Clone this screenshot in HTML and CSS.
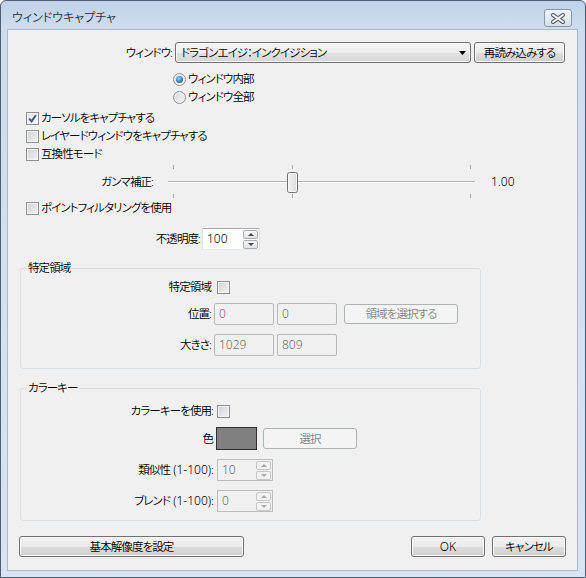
FILE: index.html
```html
<!DOCTYPE html>
<html lang="ja">
<head>
<meta charset="utf-8">
<title>ウィンドウキャプチャ</title>
<link rel="stylesheet" href="styles.css">
</head>
<body>
<div class="window">
  <div class="titlebar">
    <span class="title">ウィンドウキャプチャ</span>
    <span class="close">
      <svg width="16" height="11" viewBox="0 0 16 11">
        <path d="M3 2 L13 9 M13 2 L3 9" stroke="#56606d" stroke-width="4" stroke-linecap="round" fill="none"/>
        <path d="M3 2 L13 9 M13 2 L3 9" stroke="#f6f8fb" stroke-width="2" stroke-linecap="round" fill="none"/>
      </svg>
    </span>
  </div>
  <div class="client">
    <div class="row r-window">
      <span class="lbl lbl-window">ウィンドウ:</span>
      <div class="select">
        <span class="select-text">ドラゴンエイジ：インクイジション</span>
        <svg class="arrow" width="7" height="4" viewBox="0 0 7 4"><path d="M0 0 H7 L3.5 4 Z" fill="#000"/></svg>
      </div>
      <div class="btn btn-reload">再読み込みする</div>
    </div>

    <div class="radios">
      <div class="opt"><span class="radio checked"><span class="dot"></span></span><span class="opt-text">ウィンドウ内部</span></div>
      <div class="opt"><span class="radio"></span><span class="opt-text">ウィンドウ全部</span></div>
    </div>

    <div class="checks">
      <div class="opt"><span class="cb checked"><svg width="11" height="11" viewBox="0 0 11 11"><path d="M2.2 5.6 L4.6 8.3 L8.8 2.2" stroke="#3f5791" stroke-width="2" fill="none"/></svg></span><span class="opt-text">カーソルをキャプチャする</span></div>
      <div class="opt"><span class="cb"></span><span class="opt-text">レイヤードウィンドウをキャプチャする</span></div>
      <div class="opt"><span class="cb"></span><span class="opt-text">互換性モード</span></div>
    </div>

    <div class="row r-gamma">
      <span class="lbl lbl-gamma">ガンマ補正:</span>
      <svg class="slider" width="314" height="34" viewBox="0 0 314 34">
        <defs>
          <linearGradient id="tg" x1="0" y1="0" x2="1" y2="0">
            <stop offset="0" stop-color="#f4f4f4"/>
            <stop offset="1" stop-color="#d9d9d9"/>
          </linearGradient>
        </defs>
        <g fill="#a7a7a7">
          <rect x="7" y="0" width="1" height="4"/>
          <rect x="7" y="29" width="1" height="4"/>
          <rect x="126" y="0" width="1" height="4"/>
          <rect x="126" y="29" width="1" height="4"/>
          <rect x="304" y="0" width="1" height="4"/>
          <rect x="304" y="29" width="1" height="4"/>
        </g>
        <rect x="2" y="16" width="307" height="1" fill="#b3b3b3"/>
        <rect x="2" y="17" width="307" height="1" fill="#ffffff"/>
        <rect x="121.5" y="7.5" width="10" height="20" rx="2" fill="url(#tg)" stroke="#6f6f6f"/>
        <rect x="122.5" y="8.5" width="8" height="18" rx="1" fill="none" stroke="#fbfbfb" stroke-opacity="0.8"/>
      </svg>
      <span class="gamma-val lat">1.00</span>
    </div>

    <div class="checks c-point">
      <div class="opt"><span class="cb"></span><span class="opt-text">ポイントフィルタリングを使用</span></div>
    </div>

    <div class="row r-opacity">
      <span class="lbl lbl-opacity">不透明度:</span>
      <div class="spin spin-opacity">
        <span class="spin-val lat">100</span>
        <span class="spin-btns"><span class="sb up"></span><span class="sb down"></span></span>
      </div>
    </div>

    <fieldset class="group group-region">
      <legend>特定領域</legend>
      <div class="row g1-r1">
        <span class="lbl glbl1">特定領域</span>
        <span class="cb g-cb1"></span>
      </div>
      <div class="row g1-r2">
        <span class="lbl glbl1">位置:</span>
        <span class="dinput lat">0</span>
        <span class="dinput lat">0</span>
        <span class="btn disabled btn-select-region">領域を選択する</span>
      </div>
      <div class="row g1-r3">
        <span class="lbl glbl1">大きさ:</span>
        <span class="dinput lat">1029</span>
        <span class="dinput lat">809</span>
      </div>
    </fieldset>

    <fieldset class="group group-color">
      <legend>カラーキー</legend>
      <div class="row g2-r1">
        <span class="lbl glbl2">カラーキーを使用:</span>
        <span class="cb g-cb2"></span>
      </div>
      <div class="row g2-r2">
        <span class="lbl glbl2">色</span>
        <span class="swatch"></span>
        <span class="btn disabled btn-choose">選択</span>
      </div>
      <div class="row g2-r3">
        <span class="lbl glbl2">類似性<span class="lat"> (1-100)</span>:</span>
        <div class="spin disabled spin-small">
          <span class="spin-val lat">10</span>
          <span class="spin-btns"><span class="sb up"></span><span class="sb down"></span></span>
        </div>
      </div>
      <div class="row g2-r4">
        <span class="lbl glbl2">ブレンド<span class="lat"> (1-100)</span>:</span>
        <div class="spin disabled spin-small">
          <span class="spin-val lat">0</span>
          <span class="spin-btns"><span class="sb up"></span><span class="sb down"></span></span>
        </div>
      </div>
    </fieldset>

    <div class="bottom">
      <div class="btn btn-base">基本解像度を設定</div>
      <div class="btn btn-ok lat">OK</div>
      <div class="btn btn-cancel">キャンセル</div>
    </div>
  </div>
</div>
</body>
</html>
```

FILE: styles.css
```css
* { box-sizing: border-box; }
html, body { margin: 0; padding: 0; }
body {
  width: 586px;
  height: 578px;
  overflow: hidden;
  background: #ffffff;
  font-family: "Noto Sans", "Noto Sans CJK JP", sans-serif;
  font-size: 11.5px;
  font-weight: 350;
  letter-spacing: -0.9px;
  color: #000;
  font-feature-settings: "palt";
}
.lat {
  font-size: 12px;
  letter-spacing: 0;
}

.window {
  width: 586px;
  height: 578px;
  border: 1px solid #4d5e73;
  border-radius: 6px 6px 0 0;
  background: linear-gradient(to bottom, #bfd2e8 0, #cfdcee 28px, #d8e4f2 100%);
  display: flex;
  flex-direction: column;
}

.titlebar {
  height: 28px;
  flex: none;
  display: flex;
  align-items: flex-start;
  justify-content: space-between;
  padding: 8px 13px 0 11px;
}
.title {
  font-size: 12px;
  letter-spacing: 0;
  line-height: 18px;
  color: #1e2c3e;
}
.close {
  width: 28px;
  height: 18px;
  border: 1px solid #8896aa;
  border-radius: 3px;
  background: linear-gradient(#eff4f9, #d6e0ec);
  display: flex;
  align-items: center;
  justify-content: center;
}

.client {
  margin: 0 7px 0 6px;
  width: 571px;
  height: 542px;
  flex: none;
  border: 1px solid #a9b9cc;
  background: #f0f0f0;
  display: flex;
  flex-direction: column;
  align-items: flex-start;
}

.row {
  display: flex;
  align-items: center;
  line-height: 16px;
}
.lbl {
  text-align: right;
  white-space: nowrap;
  flex: none;
}

/* window select row */
.r-window { margin-top: 12px; height: 21px; }
.lbl-window { width: 164px; }
.select {
  margin-left: 3px;
  width: 296px;
  height: 21px;
  display: flex;
  align-items: center;
  border: 1px solid #707070;
  border-radius: 3px;
  background: linear-gradient(#f4f4f4 0%, #ededed 50%, #e2e2e2 51%, #d6d6d6 100%);
  box-shadow: inset 0 0 0 1px rgba(255,255,255,0.75);
  padding-left: 5px;
}
.select-text { flex: 1; white-space: nowrap; }
.arrow { margin-right: 4px; flex: none; }

.btn {
  display: flex;
  align-items: center;
  justify-content: center;
  height: 21px;
  border: 1px solid #707070;
  border-radius: 3px;
  background: linear-gradient(#f2f2f2 0%, #ebebeb 50%, #dddddd 51%, #cfcfcf 100%);
  box-shadow: inset 0 0 0 1px #fbfbfb;
  white-space: nowrap;
  line-height: 16px;
  flex: none;
}
.btn.disabled {
  border-color: #adb2b5;
  background: #f4f4f4;
  box-shadow: none;
  color: #838383;
}
.btn-reload { margin-left: 3px; width: 91px; }

/* radios and checks */
.radios { margin-top: 7px; margin-left: 165px; }
.checks { margin-left: 18px; }
.radios + .checks { margin-top: 3px; }
.opt {
  height: 18px;
  display: flex;
  align-items: center;
  line-height: 16px;
}
.opt-text { margin-left: 2px; white-space: nowrap; }

.radio {
  width: 13px;
  height: 13px;
  border-radius: 50%;
  border: 1px solid #8e8f8f;
  background: linear-gradient(135deg, #d5d7da, #f7f7f7);
  box-shadow: inset 0 0 0 1px #f3f3f3;
  display: flex;
  align-items: center;
  justify-content: center;
  flex: none;
}
.radio .dot {
  width: 7px;
  height: 7px;
  border-radius: 50%;
  background: radial-gradient(circle at 40% 35%, #9ad8f7 0, #3f8cc8 45%, #1c4f86 100%);
}

.cb {
  width: 13px;
  height: 13px;
  border: 1px solid #8e8f8f;
  background: linear-gradient(135deg, #cdd0d4, #f5f5f5);
  box-shadow: inset 0 0 0 1px #f4f4f4;
  display: flex;
  align-items: center;
  justify-content: center;
  flex: none;
}
.cb.checked { background: linear-gradient(135deg, #dfe2e6, #fafafa); }

/* gamma row */
.r-gamma { margin-top: 2px; height: 34px; }
.lbl-gamma { width: 145px; }
.slider { margin-left: 13px; flex: none; display: block; }
.gamma-val { margin-left: 11px; }

/* opacity */
.r-opacity { margin-top: 11px; height: 22px; }
.lbl-opacity { width: 192px; }

.spin {
  height: 22px;
  display: flex;
  align-items: center;
  border: 1px solid;
  border-color: #abadb3 #dbdfe6 #e3e9ef #e2e3ea;
  background: #fff;
  padding-left: 4px;
  flex: none;
}
.spin-opacity { margin-left: 2px; width: 58px; }
.spin-val { flex: 1; }
.spin-btns {
  display: flex;
  flex-direction: column;
  gap: 1px;
  margin-right: 1px;
}
.sb {
  width: 15px;
  height: 9px;
  border: 1px solid #a9adb3;
  border-radius: 2px;
  background: linear-gradient(#f7f7f7, #e3e3e3);
  display: flex;
  align-items: center;
  justify-content: center;
}
.sb::before {
  content: "";
  width: 0;
  height: 0;
  border-left: 3px solid transparent;
  border-right: 3px solid transparent;
}
.sb.up::before { border-bottom: 3px solid #4a4a4a; }
.sb.down::before { border-top: 3px solid #4a4a4a; }

.spin.disabled {
  border: 1px solid #bcbcbc;
  background: #f0f0f0;
  color: #6d6d6d;
}
.spin.disabled .sb {
  border-color: #c6c6c6;
  background: #f2f2f2;
}
.spin.disabled .sb.up::before { border-bottom-color: #a8a8a8; }
.spin.disabled .sb.down::before { border-top-color: #a8a8a8; }
.spin-small { margin-left: 4px; width: 56px; }

/* groups */
.group {
  margin: 11px 0 0 12px;
  width: 461px;
  border: 1px solid #d5dfe5;
  border-radius: 3px;
  padding: 0 0 12px 0;
  min-width: 0;
}
.group legend {
  margin-left: 6px;
  padding: 0 1px;
  line-height: 14px;
}
.group-color { margin-top: 12px; padding-bottom: 8px; }

.glbl1 { width: 190px; }
.glbl2 { width: 192px; }

.g1-r1 { margin-top: 3px; height: 18px; }
.g-cb1 { margin-left: 6px; }
.g1-r2 { margin-top: 7px; height: 22px; }
.g1-r3 { margin-top: 9px; height: 22px; }

.dinput {
  width: 60px;
  height: 22px;
  border: 1px solid #b8b8b8;
  border-radius: 2px;
  background: #f0f0f0;
  color: #6d6d6d;
  padding-left: 4px;
  display: flex;
  align-items: center;
  margin-left: 3px;
  flex: none;
}
.btn-select-region { margin-left: 7px; width: 114px; height: 20px; }

.g2-r1 { margin-top: 7px; height: 18px; }
.g-cb2 { margin-left: 4px; }
.g2-r2 { margin-top: 7px; height: 23px; }
.swatch {
  margin-left: 3px;
  width: 41px;
  height: 23px;
  border: 1px solid #2f2f2f;
  background: #808080;
  flex: none;
}
.btn-choose { margin-left: 6px; width: 94px; }
.g2-r3 { margin-top: 9px; height: 22px; }
.g2-r4 { margin-top: 9px; height: 22px; }

/* bottom buttons */
.bottom {
  margin-top: 15px;
  width: 100%;
  display: flex;
  padding: 0 11px;
}
.btn-base { width: 225px; }
.btn-ok { margin-left: auto; width: 74px; }
.btn-cancel { margin-left: 7px; width: 74px; }
```
